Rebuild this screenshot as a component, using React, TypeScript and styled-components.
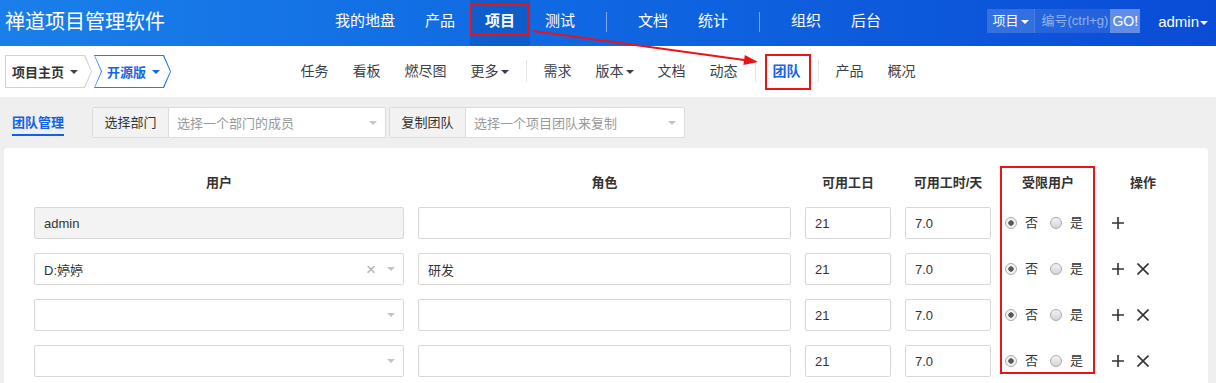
import React from 'react'
import styled, { createGlobalStyle } from 'styled-components'

const GlobalStyle = createGlobalStyle`
  * { box-sizing: border-box; }
  body {
    margin: 0;
    background: #efefef;
    font-family: "Liberation Sans", "Noto Sans CJK SC", sans-serif;
    font-size: 13px;
    color: #333;
  }
`

const Page = styled.div`
  position: relative;
  min-height: 383px;
`

const Caret = styled.span<{ $color?: string }>`
  display: inline-block;
  flex: none;
  width: 0;
  height: 0;
  margin-left: 3px;
  vertical-align: middle;
  border-top: 4px solid ${(p) => p.$color || 'currentColor'};
  border-left: 4px solid transparent;
  border-right: 4px solid transparent;
`

/* ---------- top bar ---------- */
const TopBar = styled.header`
  height: 46px;
  display: grid;
  grid-template-columns: 1fr auto 1fr;
  background: linear-gradient(90deg, #1a7fea 0%, #1069e2 45%, #0a4cd6 100%);
  color: #fff;
`
const Brand = styled.div`
  padding-left: 5px;
  font-size: 20px;
  line-height: 44px;
  white-space: nowrap;
`
const MainNav = styled.nav`
  display: flex;
`
const MainNavItem = styled.a<{ $active?: boolean; $marked?: boolean }>`
  position: relative;
  padding: 0 15px;
  font-size: 15px;
  line-height: 42px;
  font-weight: ${(p) => (p.$active ? 700 : 400)};
  background: ${(p) => (p.$active ? 'rgba(0, 25, 90, 0.16)' : 'transparent')};
  white-space: nowrap;
  &::after {
    content: '';
    display: ${(p) => (p.$marked ? 'block' : 'none')};
    position: absolute;
    left: 0;
    right: 1px;
    top: 4px;
    bottom: 11px;
    border: 2px solid #e8141a;
  }
`
const NavDivider = styled.span<{ $light?: boolean }>`
  width: 1px;
  margin: ${(p) => (p.$light ? '14px 5px 15px' : '12px 16px 14px')};
  background: ${(p) => (p.$light ? '#e4e4e4' : 'rgba(255, 255, 255, 0.45)')};
`
const TopRight = styled.div`
  display: flex;
  justify-content: flex-end;
  align-items: center;
  padding: 0 8px 4px 0;
  gap: 18px;
`
const SearchGroup = styled.div`
  display: flex;
  height: 24px;
  font-size: 13px;
  line-height: 24px;
`
const SearchType = styled.span`
  padding: 0 5px;
  background: rgba(255, 255, 255, 0.16);
  border-right: 1px solid rgba(255, 255, 255, 0.12);
  white-space: nowrap;
`
const SearchInput = styled.span`
  width: 75px;
  padding-left: 6px;
  background: rgba(255, 255, 255, 0.1);
  color: rgba(255, 255, 255, 0.5);
  white-space: nowrap;
`
const GoButton = styled.span`
  padding: 0 2px;
  background: rgba(255, 255, 255, 0.35);
  font-size: 14px;
`
const UserMenu = styled.span`
  font-size: 15px;
  white-space: nowrap;
`

/* ---------- sub bar ---------- */
const SubBar = styled.div`
  height: 51px;
  display: grid;
  grid-template-columns: 1fr auto 1fr;
  background: #fff;
`
const Crumbs = styled.div`
  display: flex;
  align-items: center;
  gap: 2px;
  padding-left: 5px;
`
const crumbShape = (notch: boolean) =>
  `polygon(0 0, calc(100% - 7px) 0, 100% 50%, calc(100% - 7px) 100%, 0 100%${notch ? ', 7px 50%' : ''})`

const Crumb = styled.span<{ $border: string; $notch?: boolean }>`
  display: flex;
  height: 33px;
  padding: 1px;
  background: ${(p) => p.$border};
  clip-path: ${(p) => crumbShape(!!p.$notch)};
`
const CrumbInner = styled.span<{ $notch?: boolean; $color: string }>`
  display: flex;
  align-items: center;
  height: 31px;
  padding: ${(p) => (p.$notch ? '0 10px 0 12px' : '0 13px 0 6px')};
  background: #fff;
  clip-path: ${(p) => crumbShape(!!p.$notch)};
  color: ${(p) => p.$color};
  font-size: 13px;
  font-weight: 700;
  white-space: nowrap;
  ${Caret} {
    margin-left: 6px;
  }
`
const SubNav = styled.nav`
  display: flex;
`
const SubNavItem = styled.a<{ $marked?: boolean }>`
  position: relative;
  padding: 0 12px;
  font-size: 14px;
  line-height: 51px;
  color: ${(p) => (p.$marked ? '#1565e6' : '#3a3f4a')};
  font-weight: ${(p) => (p.$marked ? 700 : 400)};
  white-space: nowrap;
  ${Caret} {
    margin-left: 2px;
  }
  &::after {
    content: '';
    display: ${(p) => (p.$marked ? 'block' : 'none')};
    position: absolute;
    left: 4px;
    right: 2px;
    top: 8px;
    bottom: 7px;
    border: 2px solid #e8141a;
  }
`

/* ---------- toolbar ---------- */
const Toolbar = styled.div`
  height: 51px;
  display: flex;
  align-items: center;
  padding: 0 8px 0 12px;
`
const TabLink = styled.a`
  margin: 3px 28px 0 0;
  padding-bottom: 1px;
  border-bottom: 2px solid #0f62e8;
  font-size: 13px;
  font-weight: 700;
  line-height: 20px;
  color: #0f62e8;
`
const InputGroup = styled.div<{ $width: number }>`
  display: flex;
  height: 31px;
  margin-right: 3px;
  background: #fff;
  border: 1px solid #dcdcdc;
  border-radius: 2px;
  width: ${(p) => p.$width}px;
`
const GroupLabel = styled.span`
  flex: none;
  width: 76px;
  text-align: center;
  line-height: 29px;
  background: #f2f2f2;
  border-right: 1px solid #dcdcdc;
  color: #333;
`
const GroupSelect = styled.span`
  flex: 1;
  display: flex;
  align-items: center;
  justify-content: space-between;
  padding: 0 8px 0 8px;
  color: #999;
`

/* ---------- panel / table ---------- */
const Panel = styled.main`
  margin: 0 8px 0 4px;
  padding: 25px 0 20px 30px;
  background: #fff;
  border-radius: 4px;
`
const TeamTable = styled.div`
  position: relative;
  display: grid;
  grid-template-columns: 370px 373px 86px 86px 86px 76px;
  grid-template-rows: 20px;
  grid-auto-rows: 32px;
  column-gap: 14px;
  row-gap: 14px;
`
const HeadCell = styled.div`
  text-align: center;
  font-weight: 700;
  line-height: 20px;
  color: #333;
`
const Field = styled.div<{ $disabled?: boolean }>`
  display: flex;
  align-items: center;
  height: 32px;
  padding: 0 8px 0 9px;
  border: 1px solid #d8d8d8;
  border-radius: 2px;
  background: ${(p) => (p.$disabled ? '#f3f3f3' : '#fff')};
  color: #333;
  white-space: nowrap;
`
const FieldValue = styled.span`
  flex: 1;
`
const ClearMark = styled.span`
  margin-right: 8px;
  color: #b0b0b0;
  font-size: 17px;
  line-height: 1;
`
const RadioCell = styled.div`
  display: flex;
  align-items: center;
`
const RadioDot = styled.span<{ $checked?: boolean }>`
  flex: none;
  width: 12px;
  height: 12px;
  margin-right: 8px;
  border-radius: 50%;
  border: 1px solid #ababab;
  background: ${(p) =>
    p.$checked
      ? 'radial-gradient(circle, #595959 0 2.4px, #f1f1f1 3px)'
      : 'linear-gradient(#f3f3f3, #d5d5d5)'};
`
const RadioText = styled.span`
  margin-right: 12px;
  line-height: 16px;
`
const Actions = styled.div`
  display: flex;
  align-items: center;
  gap: 13px;
  padding-left: 7px;
`
const ColumnMark = styled.div`
  position: absolute;
  left: 966px;
  top: -7px;
  width: 95px;
  height: 208px;
  border: 2px solid #e8141a;
  pointer-events: none;
`
const ArrowLayer = styled.svg`
  position: absolute;
  left: 0;
  top: 0;
  pointer-events: none;
`

const PlusIcon = () => (
  <svg width="12" height="12" viewBox="0 0 12 12">
    <path d="M6 0v12M0 6h12" stroke="#333" strokeWidth="1.6" />
  </svg>
)
const CrossIcon = () => (
  <svg width="12" height="12" viewBox="0 0 12 12">
    <path d="M0.5 0.5l11 11M11.5 0.5l-11 11" stroke="#333" strokeWidth="1.6" />
  </svg>
)

interface Member {
  user: string
  role: string
  fixed?: boolean
  clearable?: boolean
}

const members: Member[] = [
  { user: 'admin', role: '', fixed: true },
  { user: 'D:婷婷', role: '研发', clearable: true },
  { user: '', role: '' },
  { user: '', role: '' },
]

const mainNav = ['我的地盘', '产品', '项目', '测试', '|', '文档', '统计', '|', '组织', '后台']
const subNav = ['任务', '看板', '燃尽图', '更多▾', '|', '需求', '版本▾', '文档', '动态', '|', '团队', '|', '产品', '概况']

export default function App() {
  return (
    <Page>
      <GlobalStyle />
      <TopBar>
        <Brand>禅道项目管理软件</Brand>
        <MainNav>
          {mainNav.map((item, i) =>
            item === '|' ? (
              <NavDivider key={i} />
            ) : (
              <MainNavItem key={i} $active={item === '项目'} $marked={item === '项目'}>
                {item}
              </MainNavItem>
            ),
          )}
        </MainNav>
        <TopRight>
          <SearchGroup>
            <SearchType>
              项目
              <Caret $color="#fff" />
            </SearchType>
            <SearchInput>编号(ctrl+g)</SearchInput>
            <GoButton>GO!</GoButton>
          </SearchGroup>
          <UserMenu>
            admin
            <Caret $color="#fff" style={{ marginLeft: 1 }} />
          </UserMenu>
        </TopRight>
      </TopBar>

      <SubBar>
        <Crumbs>
          <Crumb $border="#d2d2d2">
            <CrumbInner $color="#333">
              项目主页
              <Caret $color="#444" />
            </CrumbInner>
          </Crumb>
          <Crumb $border="#2a78ef" $notch>
            <CrumbInner $color="#1565e6" $notch>
              开源版
              <Caret $color="#1565e6" />
            </CrumbInner>
          </Crumb>
        </Crumbs>
        <SubNav>
          {subNav.map((item, i) =>
            item === '|' ? (
              <NavDivider key={i} $light />
            ) : (
              <SubNavItem key={i} $marked={item === '团队'}>
                {item.replace('▾', '')}
                {item.endsWith('▾') && <Caret $color="#3a3f4a" />}
              </SubNavItem>
            ),
          )}
        </SubNav>
        <div />
      </SubBar>

      <Toolbar>
        <TabLink>团队管理</TabLink>
        <InputGroup $width={294}>
          <GroupLabel>选择部门</GroupLabel>
          <GroupSelect>
            选择一个部门的成员
            <Caret $color="#c4c4c4" />
          </GroupSelect>
        </InputGroup>
        <InputGroup $width={296}>
          <GroupLabel>复制团队</GroupLabel>
          <GroupSelect>
            选择一个项目团队来复制
            <Caret $color="#c4c4c4" />
          </GroupSelect>
        </InputGroup>
      </Toolbar>

      <Panel>
        <TeamTable>
          <HeadCell>用户</HeadCell>
          <HeadCell>角色</HeadCell>
          <HeadCell>可用工日</HeadCell>
          <HeadCell>可用工时/天</HeadCell>
          <HeadCell>受限用户</HeadCell>
          <HeadCell>操作</HeadCell>
          {members.map((m, i) => (
            <React.Fragment key={i}>
              <Field $disabled={m.fixed}>
                <FieldValue>{m.user}</FieldValue>
                {m.clearable && <ClearMark>×</ClearMark>}
                {!m.fixed && <Caret $color="#c4c4c4" />}
              </Field>
              <Field>{m.role}</Field>
              <Field>21</Field>
              <Field>7.0</Field>
              <RadioCell>
                <RadioDot $checked />
                <RadioText>否</RadioText>
                <RadioDot />
                <RadioText>是</RadioText>
              </RadioCell>
              <Actions>
                <PlusIcon />
                {!m.fixed && <CrossIcon />}
              </Actions>
            </React.Fragment>
          ))}
          <ColumnMark />
        </TeamTable>
      </Panel>

      <ArrowLayer width="1216" height="100" viewBox="0 0 1216 100">
        <line x1="533" y1="31" x2="746" y2="60.3" stroke="#e8141a" strokeWidth="2" />
        <polygon points="758,62 743.4,65 744.8,55.1" fill="#e8141a" />
      </ArrowLayer>
    </Page>
  )
}
